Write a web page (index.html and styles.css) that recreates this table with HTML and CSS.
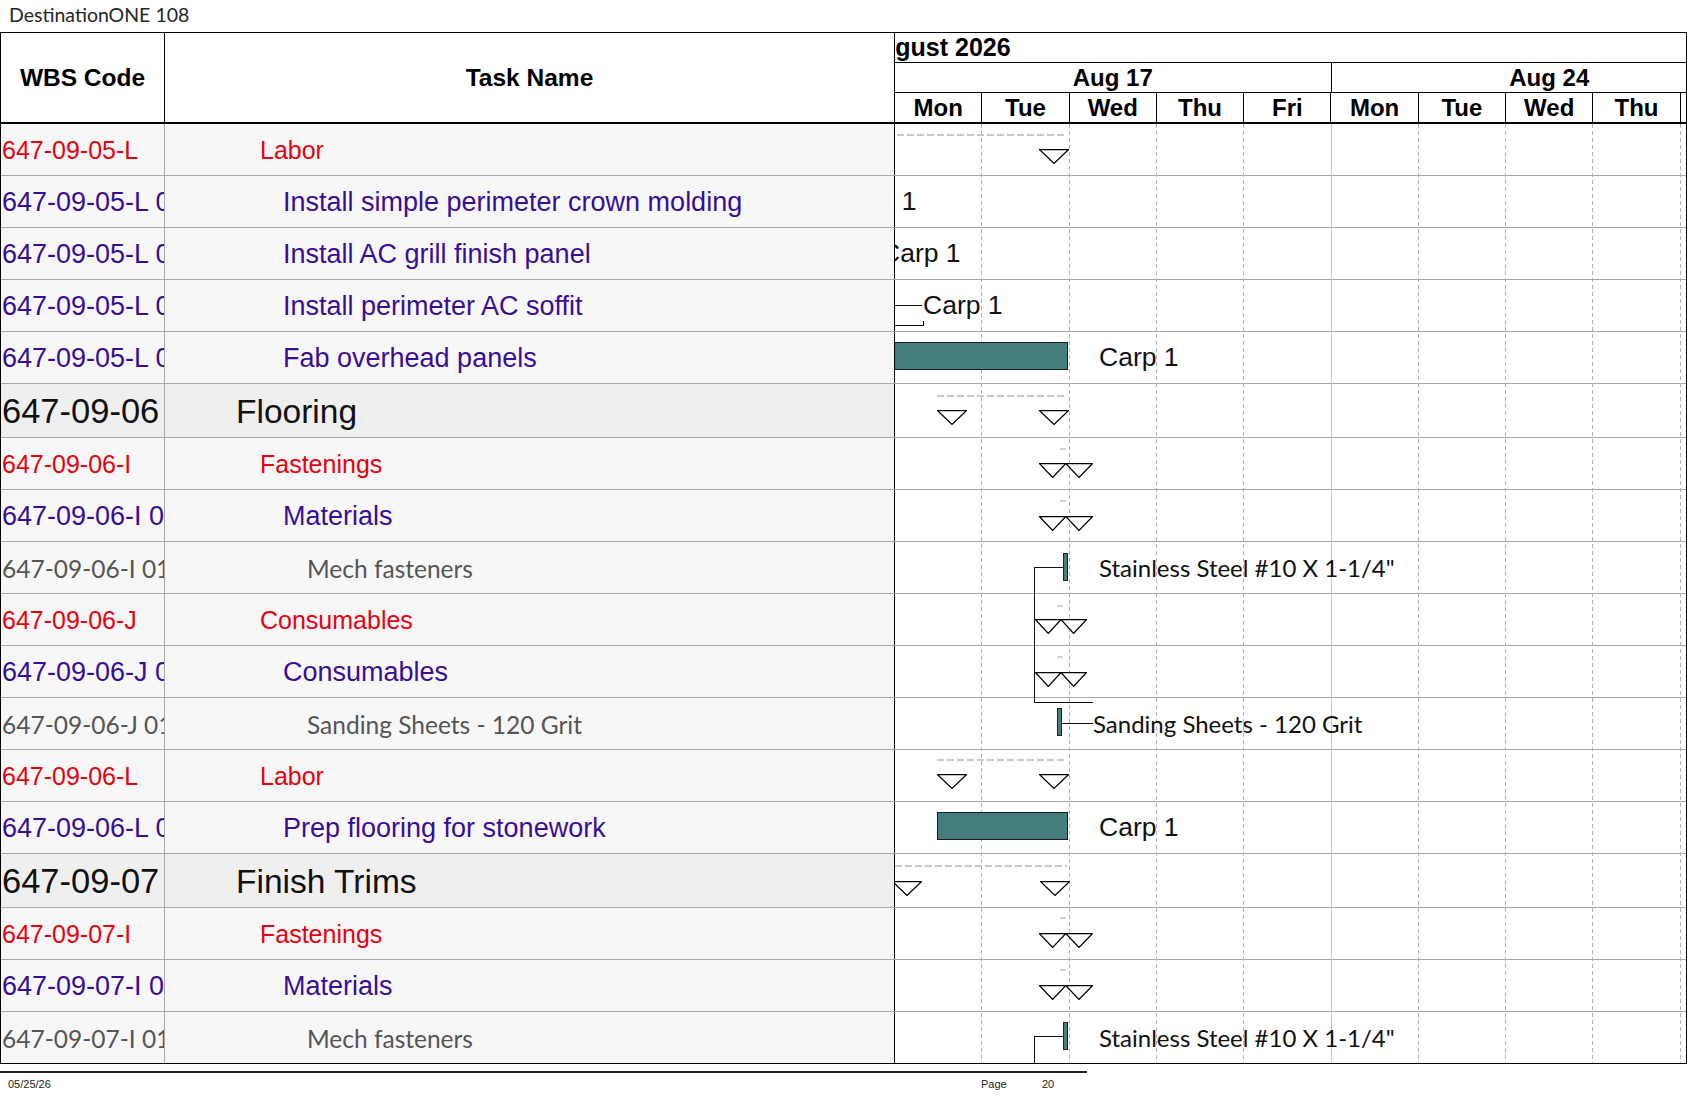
FILE: index.html
```html
<!DOCTYPE html>
<html>
<head>
<meta charset="utf-8">
<title>DestinationONE 108</title>
<link rel="stylesheet" href="styles.css">
</head>
<body>
<div class="title">DestinationONE 108</div>
<div class="sheet">
  <div class="head">
    <div class="h-wbs">WBS Code</div>
    <div class="h-task">Task Name</div>
    <div class="h-gantt">
      <div class="g-month"><span class="month-txt">August 2026</span></div>
      <div class="g-weeks">
        <div class="wk">Aug 17</div>
        <div class="wk">Aug 24</div>
      </div>
      <div class="g-days">
        <div class="day">Mon</div><div class="day">Tue</div><div class="day">Wed</div><div class="day">Thu</div><div class="day">Fri</div>
        <div class="day">Mon</div><div class="day">Tue</div><div class="day">Wed</div><div class="day">Thu</div><div class="day">Fri</div>
      </div>
    </div>
  </div>
  <div class="body">
    <div class="glines">
      <div class="vl" style="left:86.3px"></div>
      <div class="vl" style="left:173.6px"></div>
      <div class="vl" style="left:260.9px"></div>
      <div class="vl" style="left:348.2px"></div>
      <div class="vl week" style="left:435.5px"></div>
      <div class="vl" style="left:522.8px"></div>
      <div class="vl" style="left:610.1px"></div>
      <div class="vl" style="left:697.4px"></div>
      <div class="vl" style="left:784.7px"></div>
      <div class="m vln" style="left:139px;top:443px;height:135px"></div>
      <div class="m ln" style="left:139px;top:578px;width:59px"></div>
    </div>

    <div class="row">
      <div class="wbs lv3">647-09-05-L</div>
      <div class="task lv3">Labor</div>
      <div class="gc">
        <div class="m sum" style="left:2px;top:10px;width:170px"></div>
        <svg class="m tri" style="left:144px;top:25px" width="30" height="15" viewBox="0 0 30 15"><path d="M0.6 0.6H29.4L15 14.4Z"/></svg>
      </div>
    </div>

    <div class="row">
      <div class="wbs lv4">647-09-05-L 01</div>
      <div class="task lv4">Install simple perimeter crown molding</div>
      <div class="gc">
        <div class="m lbl" style="left:-58px">Carp 1</div>
      </div>
    </div>

    <div class="row">
      <div class="wbs lv4">647-09-05-L 02</div>
      <div class="task lv4">Install AC grill finish panel</div>
      <div class="gc">
        <div class="m lbl" style="left:-14px">Carp 1</div>
      </div>
    </div>

    <div class="row">
      <div class="wbs lv4">647-09-05-L 03</div>
      <div class="task lv4">Install perimeter AC soffit</div>
      <div class="gc">
        <div class="m ln" style="left:0;top:25px;width:27px"></div>
        <div class="m lbl" style="left:28px">Carp 1</div>
        <div class="m ln" style="left:0;top:45px;width:29px"></div>
        <div class="m vln" style="left:28px;top:41px;height:5px"></div>
      </div>
    </div>

    <div class="row">
      <div class="wbs lv4">647-09-05-L 04</div>
      <div class="task lv4">Fab overhead panels</div>
      <div class="gc">
        <div class="m bar" style="left:-2px;top:10px;width:175px"></div>
        <div class="m lbl" style="left:204px">Carp 1</div>
      </div>
    </div>

    <div class="row h2">
      <div class="wbs lv2">647-09-06</div>
      <div class="task lv2">Flooring</div>
      <div class="gc">
        <div class="m sum" style="left:42px;top:11px;width:129px"></div>
        <svg class="m tri" style="left:42px;top:26px" width="30" height="15" viewBox="0 0 30 15"><path d="M0.6 0.6H29.4L15 14.4Z"/></svg>
        <svg class="m tri" style="left:144px;top:26px" width="30" height="15" viewBox="0 0 30 15"><path d="M0.6 0.6H29.4L15 14.4Z"/></svg>
      </div>
    </div>

    <div class="row">
      <div class="wbs lv3">647-09-06-I</div>
      <div class="task lv3">Fastenings</div>
      <div class="gc">
        <div class="m dash" style="left:165px;top:10px"></div>
        <svg class="m tri2" style="left:144px;top:25px" width="54" height="15" viewBox="0 0 54 15"><path d="M0.6 0.6H53.4L40 14.4L26.8 0.6L13.6 14.4Z"/></svg>
      </div>
    </div>

    <div class="row">
      <div class="wbs lv4">647-09-06-I 01</div>
      <div class="task lv4">Materials</div>
      <div class="gc">
        <div class="m dash" style="left:165px;top:10px"></div>
        <svg class="m tri2" style="left:144px;top:26px" width="54" height="15" viewBox="0 0 54 15"><path d="M0.6 0.6H53.4L40 14.4L26.8 0.6L13.6 14.4Z"/></svg>
      </div>
    </div>

    <div class="row">
      <div class="wbs lv5">647-09-06-I 01 01</div>
      <div class="task lv5">Mech fasteners</div>
      <div class="gc">
        <div class="m ln" style="left:139px;top:25px;width:30px"></div>
        <div class="m ms" style="left:168px;top:11px"></div>
        <div class="m lbl cal" style="left:204px">Stainless Steel #10 X 1-1/4"</div>
      </div>
    </div>

    <div class="row">
      <div class="wbs lv3">647-09-06-J</div>
      <div class="task lv3">Consumables</div>
      <div class="gc">
        <div class="m dash" style="left:162px;top:11px"></div>
        <svg class="m tri2" style="left:140px;top:25px" width="52" height="15" viewBox="0 0 52 15"><path d="M0.6 0.6H51.4L38.6 14.4L26 0.6L13.3 14.4Z"/></svg>
      </div>
    </div>

    <div class="row">
      <div class="wbs lv4">647-09-06-J 01</div>
      <div class="task lv4">Consumables</div>
      <div class="gc">
        <div class="m dash" style="left:162px;top:10px"></div>
        <svg class="m tri2" style="left:140px;top:26px" width="52" height="15" viewBox="0 0 52 15"><path d="M0.6 0.6H51.4L38.6 14.4L26 0.6L13.3 14.4Z"/></svg>
      </div>
    </div>

    <div class="row">
      <div class="wbs lv5">647-09-06-J 01 01</div>
      <div class="task lv5">Sanding Sheets - 120 Grit</div>
      <div class="gc">
        <div class="m ms" style="left:162px;top:10px"></div>
        <div class="m ln" style="left:167px;top:25px;width:31px"></div>
        <div class="m lbl cal" style="left:198px">Sanding Sheets - 120 Grit</div>
      </div>
    </div>

    <div class="row">
      <div class="wbs lv3">647-09-06-L</div>
      <div class="task lv3">Labor</div>
      <div class="gc">
        <div class="m sum" style="left:42px;top:9px;width:128px"></div>
        <svg class="m tri" style="left:42px;top:24px" width="30" height="15" viewBox="0 0 30 15"><path d="M0.6 0.6H29.4L15 14.4Z"/></svg>
        <svg class="m tri" style="left:144px;top:24px" width="30" height="15" viewBox="0 0 30 15"><path d="M0.6 0.6H29.4L15 14.4Z"/></svg>
      </div>
    </div>

    <div class="row">
      <div class="wbs lv4">647-09-06-L 01</div>
      <div class="task lv4">Prep flooring for stonework</div>
      <div class="gc">
        <div class="m bar" style="left:42px;top:10px;width:131px"></div>
        <div class="m lbl" style="left:204px">Carp 1</div>
      </div>
    </div>

    <div class="row h2">
      <div class="wbs lv2">647-09-07</div>
      <div class="task lv2">Finish Trims</div>
      <div class="gc">
        <div class="m sum" style="left:0;top:11px;width:172px"></div>
        <svg class="m tri" style="left:-3px;top:27px" width="30" height="15" viewBox="0 0 30 15"><path d="M0.6 0.6H29.4L15 14.4Z"/></svg>
        <svg class="m tri" style="left:145px;top:27px" width="30" height="15" viewBox="0 0 30 15"><path d="M0.6 0.6H29.4L15 14.4Z"/></svg>
      </div>
    </div>

    <div class="row">
      <div class="wbs lv3">647-09-07-I</div>
      <div class="task lv3">Fastenings</div>
      <div class="gc">
        <div class="m dash" style="left:165px;top:9px"></div>
        <svg class="m tri2" style="left:144px;top:25px" width="54" height="15" viewBox="0 0 54 15"><path d="M0.6 0.6H53.4L40 14.4L26.8 0.6L13.6 14.4Z"/></svg>
      </div>
    </div>

    <div class="row">
      <div class="wbs lv4">647-09-07-I 01</div>
      <div class="task lv4">Materials</div>
      <div class="gc">
        <div class="m dash" style="left:165px;top:9px"></div>
        <svg class="m tri2" style="left:144px;top:25px" width="54" height="15" viewBox="0 0 54 15"><path d="M0.6 0.6H53.4L40 14.4L26.8 0.6L13.6 14.4Z"/></svg>
      </div>
    </div>

    <div class="row last">
      <div class="wbs lv5">647-09-07-I 01 01</div>
      <div class="task lv5">Mech fasteners</div>
      <div class="gc">
        <div class="m ln" style="left:139px;top:24px;width:30px"></div>
        <div class="m vln" style="left:139px;top:24px;height:30px"></div>
        <div class="m ms" style="left:168px;top:10px"></div>
        <div class="m lbl cal" style="left:204px">Stainless Steel #10 X 1-1/4"</div>
      </div>
    </div>
  </div>
</div>
<div class="foot">
  <div class="f-date">05/25/26</div>
  <div class="f-page">Page</div>
  <div class="f-num">20</div>
</div>
</body>
</html>
```

FILE: styles.css
```css
html, body {
  margin: 0;
  padding: 0;
  background: #fff;
}
body {
  width: 1687px;
  height: 1097px;
  overflow: hidden;
  font-family: "Liberation Sans", Arial, sans-serif;
  color: #000;
}

.title {
  height: 32px;
  box-sizing: border-box;
  padding-left: 9px;
  font-family: Lato, "Liberation Sans", sans-serif;
  font-size: 19.5px;
  line-height: 30px;
  color: #262626;
}

.sheet {
  width: 1687px;
  box-sizing: border-box;
  border: 1px solid #000;
}

/* ---------- header ---------- */
.head {
  display: grid;
  grid-template-columns: 164px 730px 791px;
  height: 91px;
  box-sizing: border-box;
  border-bottom: 2px solid #000;
}
.h-wbs, .h-task {
  display: flex;
  align-items: center;
  justify-content: center;
  font-weight: bold;
  font-size: 24.5px;
  border-right: 1px solid #000;
}
.h-gantt {
  overflow: hidden;
  font-weight: bold;
  font-size: 24px;
  white-space: nowrap;
}
.g-month {
  height: 30px;
  box-sizing: border-box;
  border-bottom: 1px solid #000;
  line-height: 28px;
}
.month-txt {
  display: inline-block;
  margin-left: -33px;
  font-size: 25px;
}
.g-weeks {
  display: flex;
  height: 30px;
  box-sizing: border-box;
  border-bottom: 1px solid #000;
}
.wk {
  flex: none;
  width: 436.5px;
  box-sizing: border-box;
  border-right: 1px solid #000;
  text-align: center;
  line-height: 29px;
}
.g-days {
  display: flex;
  height: 29px;
}
.day {
  flex: none;
  width: 87.3px;
  box-sizing: border-box;
  border-right: 1px solid #000;
  text-align: center;
  line-height: 29px;
}

/* ---------- body ---------- */
.body {
  position: relative;
}
.glines {
  position: absolute;
  left: 894px;
  top: 0;
  bottom: 0;
  width: 791px;
  overflow: hidden;
}
.vl {
  position: absolute;
  top: 0;
  bottom: 0;
  width: 1px;
  background: repeating-linear-gradient(to bottom, #b2b2b2 0 4px, transparent 4px 7px);
}
.vl.week {
  background: #c6c6c6;
}

.row {
  display: grid;
  grid-template-columns: 164px 730px 791px;
  height: 52px;
  box-sizing: border-box;
  border-bottom: 1px solid #a8a8a8;
}
.row.h2 {
  height: 54px;
}
.row.last {
  height: 51px;
  border-bottom: none;
}

.wbs, .task {
  display: flex;
  align-items: center;
  box-sizing: border-box;
  padding-top: 2px;
  white-space: nowrap;
  overflow: hidden;
  background: #f7f7f7;
}
.row.h2 .wbs, .row.h2 .task {
  background: #efefef;
}
.wbs {
  padding-left: 1px;
  border-right: 1px solid #a8a8a8;
}
.task {
  border-right: 1px solid #000;
}

.lv2 { font-size: 33.5px; color: #111; }
.lv3 { font-size: 25px; color: #e8000f; }
.lv4 { font-size: 27px; color: #3a0e94; }
.lv5 {
  font-family: Lato, "Liberation Sans", sans-serif;
  font-size: 24.5px;
  color: #555;
}
.wbs.lv2 { font-size: 34.5px; }
.task.lv2 { padding-left: 71px; }
.task.lv3 { padding-left: 95px; }
.task.lv4 { padding-left: 118px; }
.task.lv5 { padding-left: 142px; }

/* ---------- gantt cells ---------- */
.gc {
  position: relative;
  overflow: hidden;
}
.m {
  position: absolute;
}
.sum {
  height: 2px;
  background: repeating-linear-gradient(to right, #c9c9c9 0 7px, transparent 7px 10px);
}
.dash {
  width: 6px;
  height: 2px;
  background: #d2d2d2;
}
.tri path, .tri2 path {
  fill: #fff;
  stroke: #000;
  stroke-width: 1.3;
  stroke-linejoin: miter;
}
.bar {
  height: 28px;
  box-sizing: border-box;
  background: #437d7c;
  border: 1px solid #1b1b1b;
}
.ms {
  width: 5px;
  height: 28px;
  box-sizing: border-box;
  background: #4a7c78;
  border: 1px solid #222;
}
.ln {
  height: 1px;
  background: #111;
}
.vln {
  width: 1px;
  background: #111;
}
.lbl {
  top: 0;
  height: 51px;
  line-height: 51px;
  font-size: 26.5px;
  color: #111;
  white-space: nowrap;
}
.lbl.cal {
  font-family: Lato, "Liberation Sans", sans-serif;
  font-size: 24px;
}

/* ---------- footer ---------- */
.foot {
  display: flex;
  width: 1087px;
  margin-top: 7px;
  border-top: 2px solid #222;
  padding-top: 5px;
  font-size: 11px;
  line-height: 13px;
  color: #222;
}
.f-date {
  width: 973px;
  padding-left: 8px;
}
.f-page {
  width: 61px;
}
```
